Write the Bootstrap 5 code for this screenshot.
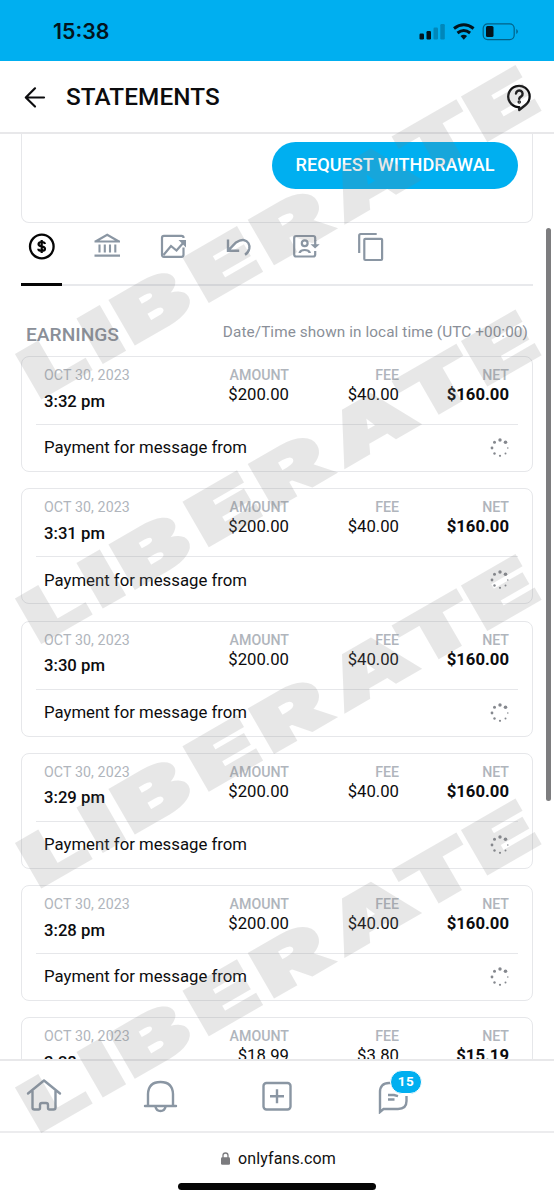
<!DOCTYPE html>
<html lang="en">
<head>
<meta charset="utf-8">
<meta name="viewport" content="width=device-width, initial-scale=1">
<title>Statements</title>
<link href="https://cdn.jsdelivr.net/npm/bootstrap@5.3.0/dist/css/bootstrap.min.css" rel="stylesheet">
<style>
body{font-family:Roboto,"Liberation Sans",sans-serif;color:#0c0c0e;background:#fff;width:554px;height:1200px;overflow:hidden}
svg{display:block;flex:none}
.statusbar{height:61px;background:#00aff0;padding:2px 36px 0 53px;font:600 21.3px/1 Inter,sans-serif;color:#03141d}
.topbar{height:73px;border-bottom:2px solid #e8e8ea;padding:0 22px 0 23px}
.topbar h1{font-size:24.3px;font-weight:500;letter-spacing:.1px;margin:0 0 0 19px;padding-top:2px;line-height:1}
.content{height:925px;overflow:hidden;padding:0 21px}
.balance{height:89px;border:1.5px solid #e6e7ea;border-top:0;border-radius:0 0 8px 8px;padding:8px 14px 0}
.btn-withdraw{height:47px;width:246px;border-radius:24px;background:#00aff0;color:#fff;font-size:18.1px;font-weight:500;padding:0 0 2px}
.tabs{height:63px;border-bottom:2px solid #e8e9ec;color:#8a96a3}
.tabs a{width:41px;height:63px;margin-right:25px;padding:9px 0 0 1px;color:inherit}
.tabs a.on{color:#050505;border-bottom:3px solid #050505;padding-left:0}
.caption-row{height:70px;padding:39px 5px 0;color:#8a8f98;line-height:1}
.caption-row .h{font-size:19.2px;font-weight:500}
.caption-row .z{font-size:15.3px;letter-spacing:.1px}
.pay{height:116px;border:1.5px solid #e6e7ea;border-radius:8px;margin-bottom:16.25px;padding:0 14px}
.pay-top{height:68px;border-bottom:1.5px solid #e6e7ea;padding:10px 8px 0}
.cell{text-align:right;font-size:16.7px;line-height:24px}
.cell small{display:block;color:#b0b5bc;font-size:14.2px;line-height:16px;font-weight:500}
.cell.date{text-align:left;width:136px}
.cell.date small{font-weight:400;letter-spacing:.1px}
.cell.date b{font-weight:500;display:block;padding-top:6.5px}
.w-a{width:109px}.w-f{width:110px}.w-n{width:110px}
.w-n b{font-weight:700}
.pay-bot{height:46px;padding:0 8px;font-size:16.75px}
.bottomnav{height:74px;border-top:2px solid #e8e8ea;border-bottom:2px solid #ececee;color:#8a96a3;padding-left:26px;gap:80px}
.count{position:absolute;left:16px;top:-8px;width:32px;height:24px;border:1.5px solid #fff;border-radius:12px;background:#00aff0;color:#fff;font-size:13.5px;font-weight:700;line-height:21px;text-align:center;letter-spacing:.6px}
.urlbar{height:50px;padding:1px 0 0 3px;font-size:16px;letter-spacing:.1px;color:#111}
.homebar{width:198px;height:6.5px;border-radius:4px;background:#050505}
.scroll-thumb{position:absolute;left:546px;top:228px;width:5px;height:573px;border-radius:3px;background:#7d7d7f}
.wm{position:absolute;left:0;top:0;pointer-events:none;font:900 68px Inter,sans-serif}
</style>
</head>
<body class="position-relative">
<div class="statusbar d-flex align-items-center justify-content-between">
  <span>15:38</span>
  <svg width="100" height="18" viewBox="0 0 100 18"><g fill="#03141d"><rect x="1.500" y="10.500" width="4.500" height="6" rx="1.200"/><rect x="8.500" y="8" width="4.500" height="8.500" rx="1.200"/><g opacity=".25"><rect x="15.500" y="4.500" width="4.500" height="12" rx="1.200"/><rect x="22.300" y="1" width="4.500" height="15.500" rx="1.200"/></g><rect x="68" y="3" width="7.500" height="11" rx="1.500"/><path d="M98.300 6v5q1.500-.8 1.500-2.500t-1.500-2.500z" opacity=".5"/></g><rect x="65.200" y=".8" width="31" height="15.800" rx="4.500" fill="none" stroke="#03141d" stroke-opacity=".5" stroke-width="1.200"/><g fill="none" stroke="#03141d" stroke-width="3"><path d="M36 5.500q9.800-7.600 19.600 0M39.500 10q6.300-5 12.600 0"/></g><path d="M42.500 13q3.300-2.500 6.600 0l-3.300 3.800z" fill="#03141d"/></svg>
</div>
<header class="topbar d-flex align-items-center">
  <svg width="24" height="24" viewBox="0 0 24 24" fill="none" stroke="#0c0c0e" stroke-width="2.200" stroke-linecap="round" stroke-linejoin="round"><path d="M21 12.500H3M12 3.300 2.800 12.500 12 21.500"/></svg>
  <h1>STATEMENTS</h1>
  <svg class="ms-auto" width="26" height="30" viewBox="0 0 26 30" fill="none" stroke="#0c0c0e" stroke-width="2.300" stroke-linecap="round" stroke-linejoin="round"><path d="M12 25.200A10.700 10.700 0 1 1 19.500 23L13.200 28v-2.800z"/><path d="M10 11.500a3.300 3.300 0 1 1 5.300 2.900q-2 1.200-2.100 2.400" stroke-width="2.400"/><circle cx="13.200" cy="20" r=".6"/></svg>
</header>
<main class="content">
  <section class="balance d-flex justify-content-end align-items-start"><button class="btn btn-withdraw">REQUEST WITHDRAWAL</button></section>
  <nav class="tabs d-flex">
    <a class="on"><svg class="mx-auto" width="28" height="28" viewBox="0 0 28 28" fill="none" stroke="currentColor" stroke-width="2.300"><circle cx="13.800" cy="14.500" r="11.800"/><path d="M17 12q-.3-2-3.300-2t-3.200 2.100q0 1.700 3.200 2.300t3.300 2.400q0 2.200-3.300 2.200t-3.400-2.200M13.700 8v13" stroke-width="2.200"/></svg></a>
    <a><svg class="mx-auto" width="28" height="28" viewBox="0 0 28 28" fill="none" stroke="currentColor" stroke-width="2.100"><path d="M.5 23.600h25.500M.5 9.500h25.500M1.500 9.500 13.200 2.800l11.700 6.700M5.500 12.500v8M10.800 12.500v8M16 12.500v8M21.300 12.500v8"/></svg></a>
    <a><svg class="mx-auto" width="28" height="28" viewBox="0 0 28 28" fill="none" stroke="currentColor" stroke-width="2.200"><path d="M23.500 6V5.500q0-1.700-2-1.700H4q-2 0-2 2v17q0 2 2 2h17.500q2 0 2-2V15.500M3.500 23l7.500-9 5.500 4.500 7.500-8.500"/><path d="M18.500 8h7.500v7.500z" fill="currentColor" stroke="none"/></svg></a>
    <a><svg class="mx-auto" width="28" height="28" viewBox="0 0 28 28" fill="none" stroke="currentColor" stroke-width="2.400"><path d="M2 7.500v11.200h11.200M2.500 18.200 10 10.500q4.500-3 7.500-2.500c5 1 6.300 5 5.800 8.500q-.8 4-4.300 6.300"/></svg></a>
    <a><svg class="mx-auto" width="28" height="28" viewBox="0 0 28 28" fill="none" stroke="currentColor" stroke-width="2.200"><path d="M23.200 9V6q0-2-2-2h-17q-2 0-2 2v16.500q0 2 2 2h17q2 0 2-2V19"/><circle cx="12.700" cy="11.200" r="2.900"/><path d="M7.700 21v-.5q1-2.500 5-2.500t5 2.500v.5M23.200 8v6"/><path d="M18.500 12.300h9.200l-4.600 4.300z" fill="currentColor" stroke="none"/></svg></a>
    <a><svg class="mx-auto" width="28" height="32" viewBox="0 0 28 32" fill="none" stroke="currentColor" stroke-width="2.200"><path d="M1.200 21V3.500Q1.200 2 2.700 2h16"/><rect x="6.300" y="6.800" width="17.800" height="21.200" rx="1"/></svg></a>
  </nav>
  <div class="caption-row d-flex justify-content-between"><span class="h">EARNINGS</span><span class="z">Date/Time shown in local time (UTC +00:00)</span></div>
  <div id="payments"></div>
</main>
<nav class="bottomnav d-flex align-items-center">
  <svg width="36" height="36" viewBox="0 0 36 36" fill="none" stroke="currentColor" stroke-width="2.400" stroke-linecap="round" stroke-linejoin="round"><path d="M2 15.500 18 2.500l16 13M6.500 13v16.500q0 2 2 2h4q1.500 0 1.500-1.500v-3q0-2 2-2h4q2 0 2 2v3q0 1.500 1.500 1.500h4q2 0 2-2V13"/></svg>
  <svg width="36" height="36" viewBox="0 0 36 36" fill="none" stroke="currentColor" stroke-width="2.400" stroke-linecap="round" stroke-linejoin="round"><path d="M3 28h31M6 28V16Q6.500 4 18.500 4T31 16v12M13.500 29q1 4 5 4t5-4"/></svg>
  <svg width="36" height="36" viewBox="0 0 36 36" fill="none" stroke="currentColor" stroke-width="2.400"><rect x="5.500" y="5" width="27" height="26.500" rx="3"/><path d="M12 18.200h14M19 11.200v14"/></svg>
  <div class="position-relative"><svg width="36" height="36" viewBox="0 0 36 36" fill="none" stroke="currentColor" stroke-width="2.400"><path d="M17 5h-2Q6 5 6 14v20l3.500-3H24q8.500 0 8.500-8v-5M14 17h6l4 1.200M14 21.500h6.500"/></svg><span class="count">15</span></div>
</nav>
<div class="urlbar d-flex align-items-center justify-content-center"><svg class="me-2" width="9" height="13" viewBox="0 0 9 13"><rect y="5.300" width="9" height="7.500" rx="1.300" fill="#7b7b7e"/><path d="M2 6V3.500a2.500 2.500 0 0 1 5 0V6" fill="none" stroke="#7b7b7e" stroke-width="1.300"/></svg>onlyfans.com</div>
<div class="homebar mx-auto"></div>
<div class="scroll-thumb"></div>
<svg class="wm" width="554" height="1200" viewBox="0 0 554 1200" fill="#808080" stroke="#808080" stroke-width="3.200" opacity=".18" id="marks"></svg>
<script src="https://cdn.jsdelivr.net/npm/bootstrap@5.3.0/dist/js/bootstrap.bundle.min.js"></script>
<script>
const rows=[["3:32","200.00","40.00","160.00"],["3:31","200.00","40.00","160.00"],["3:30","200.00","40.00","160.00"],["3:29","200.00","40.00","160.00"],["3:28","200.00","40.00","160.00"],["3:28","18.99","3.80","15.19"]];
const dots=[[11,3,1.7],[16.5,5.2,1.8],[18.8,11,.8],[16.5,16.5,1],[11,18.8,1.1],[5.5,16.5,1.2],[3,11,1.4],[5.5,5.2,1.5]].map(d=>`<circle cx="${d[0]}" cy="${d[1]}" r="${d[2]}"/>`).join("");
document.getElementById("payments").innerHTML=rows.map(r=>`<article class="pay"><div class="pay-top d-flex">
<div class="cell date"><small>OCT 30, 2023</small><b>${r[0]} pm</b></div>
<div class="cell w-a"><small>AMOUNT</small>$${r[1]}</div><div class="cell w-f"><small>FEE</small>$${r[2]}</div><div class="cell w-n"><small>NET</small><b>$${r[3]}</b></div></div>
<div class="pay-bot d-flex align-items-center justify-content-between"><span>Payment for message from</span><svg width="20" height="22" viewBox="1 0 20 22" fill="#85888e">${dots}</svg></div></article>`).join("");
// Left edge of each watermark letter along the slanted baseline, and its side bearing
const sx=1.62,pos=[0,71,108,193.5,269,350.5,434,515],bearing=[1.2,1.2,1.2,1.2,1.2,-.7,-.7,1.2];
document.getElementById("marks").innerHTML=[400,644.4,888.9,1133.3].map(y=>`<text transform="translate(40.7 ${y}) rotate(-30) scale(${sx} 1)" y="-1.6" x="${pos.map((p,i)=>(p/sx-bearing[i]).toFixed(1)).join(" ")}">LIBERATE</text>`).join("");
</script>
</body>
</html>
